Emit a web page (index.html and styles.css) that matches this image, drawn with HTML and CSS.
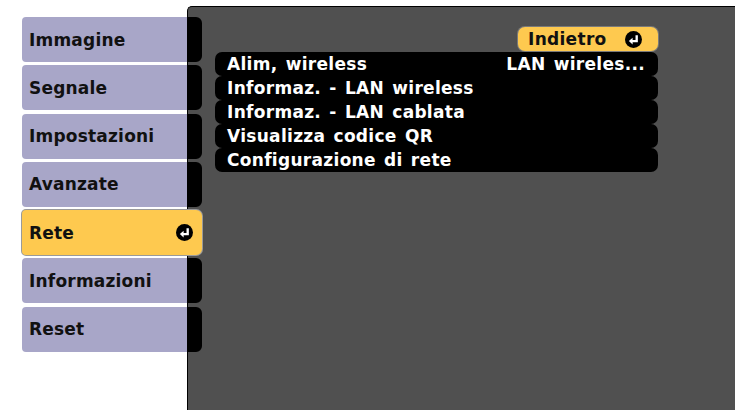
FILE: index.html
```html
<!DOCTYPE html>
<html lang="it">
  <head>
    <meta charset="UTF-8" />
    <meta name="viewport" content="width=device-width, initial-scale=1.0" />
    <title>Rete</title>
    <link rel="stylesheet" href="styles.css">
  </head>
  <body>
    <div id="screen">
      <div id="nav">
        <div class="tab">Immagine</div>
        <div class="tab">Segnale</div>
        <div class="tab">Impostazioni</div>
        <div class="tab">Avanzate</div>
        <div class="tab tab-active">
          Rete
          <svg class="enter-icon" viewBox="0 0 16 16" width="17" height="17">
            <circle cx="8" cy="8" r="8" fill="#000" />
            <path d="M11 4 V9.5 H6.5" fill="none" stroke="#fff" stroke-width="2.2" />
            <polygon points="3.6,9.5 7.2,6.4 7.2,12.6" fill="#fff" />
          </svg>
        </div>
        <div class="tab">Informazioni</div>
        <div class="tab">Reset</div>
      </div>

      <div id="panel">
        <div id="menu">
          <div class="back-btn">
            Indietro
            <svg class="enter-icon" viewBox="0 0 16 16" width="17" height="17">
              <circle cx="8" cy="8" r="8" fill="#000" />
              <path d="M11 4 V9.5 H6.5" fill="none" stroke="#fff" stroke-width="2.2" />
              <polygon points="3.6,9.5 7.2,6.4 7.2,12.6" fill="#fff" />
            </svg>
          </div>
          <div class="row"><span>Alim, wireless</span><span class="value">LAN wireles...</span></div>
          <div class="row"><span>Informaz. - LAN wireless</span></div>
          <div class="row"><span>Informaz. - LAN cablata</span></div>
          <div class="row"><span>Visualizza codice QR</span></div>
          <div class="row"><span>Configurazione di rete</span></div>
        </div>
      </div>
    </div>
  </body>
</html>
```

FILE: styles.css
```css
* {
  margin: 0;
  padding: 0;
  box-sizing: border-box;
  font-family: "DejaVu Sans", Verdana, sans-serif;
}

body {
  background-color: #ffffff;
  width: 735px;
  height: 410px;
  overflow: hidden;
}

#screen {
  display: flex;
  height: 410px;
  padding: 6px 0 0 22px;
}

#nav {
  width: 180px;
  flex-shrink: 0;
  display: flex;
  flex-direction: column;
  gap: 3.25px;
  padding-top: 11px;
  position: relative;
  z-index: 1;
}

.tab {
  height: 45px;
  display: flex;
  align-items: center;
  justify-content: space-between;
  padding: 0 9px 0 7px;
  background: linear-gradient(to right, #a8a6c8 165px, #000000 165px);
  border-radius: 4px 6px 6px 4px;
  font-size: 17px;
  font-weight: bold;
  letter-spacing: 0.2px;
  color: #111111;
}

.tab-active {
  background: #fec94f;
  box-shadow: 0 0 0 1px #9a9a9a;
}

.enter-icon {
  display: block;
  flex-shrink: 0;
}

#panel {
  flex: 1;
  margin-left: -15px;
  background-color: #505050;
  border-top: 1px solid #000000;
  border-left: 1px solid #000000;
  border-top-left-radius: 5px;
  padding: 20px 0 0 27px;
}

#menu {
  width: 443px;
  display: flex;
  flex-direction: column;
}

.back-btn {
  align-self: flex-end;
  width: 140px;
  height: 24px;
  display: flex;
  align-items: center;
  justify-content: space-between;
  padding: 0 16px 0 10px;
  background-color: #fec94f;
  border-radius: 7px;
  box-shadow: 0 0 0 1px #7a7a7a;
  font-size: 17px;
  font-weight: bold;
  letter-spacing: 0.3px;
  color: #111111;
  margin-bottom: 1px;
}

.row {
  height: 24px;
  display: flex;
  align-items: center;
  justify-content: space-between;
  padding: 0 13px 0 12px;
  background-color: #000000;
  border-radius: 7px;
  font-size: 17px;
  font-weight: bold;
  letter-spacing: 0.3px;
  word-spacing: 2px;
  color: #ffffff;
}

.row span {
  color: #ffffff;
}
```
